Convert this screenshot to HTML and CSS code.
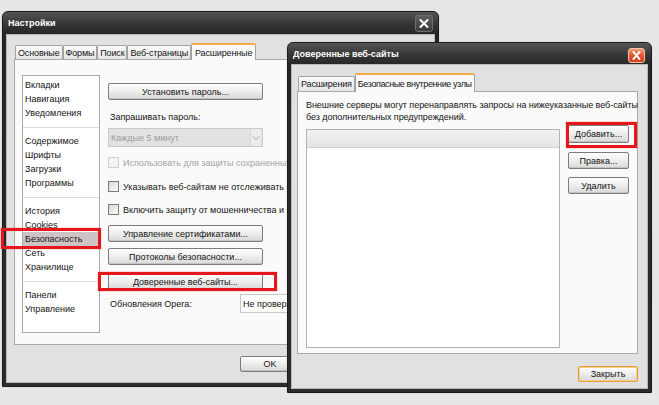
FILE: index.html
```html
<!DOCTYPE html>
<html lang="ru">
<head>
<meta charset="utf-8">
<title>Настройки</title>
<link rel="stylesheet" href="styles.css">
</head>
<body>
<div class="desktop">

  <section class="win win-settings">
    <header class="titlebar">
      <span class="title">Настройки</span>
      <span class="close close-dark">
        <svg width="18" height="17" viewBox="0 0 18 17"><path d="M5 4.5 L13 12.5 M13 4.5 L5 12.5" stroke="#fff" stroke-width="2.2" stroke-linecap="round"/></svg>
      </span>
    </header>
    <div class="win-body">
      <div class="tabs">
        <span class="tab">Основные</span>
        <span class="tab">Формы</span>
        <span class="tab">Поиск</span>
        <span class="tab">Веб-страницы</span>
        <span class="tab active">Расширенные</span>
      </div>
      <div class="panel panel-settings">
        <div class="nav-list">
          <div class="group">
            <div class="item">Вкладки</div>
            <div class="item">Навигация</div>
            <div class="item">Уведомления</div>
          </div>
          <div class="group">
            <div class="item">Содержимое</div>
            <div class="item">Шрифты</div>
            <div class="item">Загрузки</div>
            <div class="item">Программы</div>
          </div>
          <div class="group">
            <div class="item">История</div>
            <div class="item">Cookies</div>
            <div class="item selected">Безопасность</div>
            <div class="item">Сеть</div>
            <div class="item">Хранилище</div>
          </div>
          <div class="group">
            <div class="item">Панели</div>
            <div class="item">Управление</div>
          </div>
        </div>
        <div class="options">
          <button class="btn btn-wide">Установить пароль...</button>
          <div class="label ask-label">Запрашивать пароль:</div>
          <div class="select disabled">
            <span class="select-text">Каждые 5 минут</span>
            <span class="select-arrow"><svg width="8" height="6" viewBox="0 0 8 6"><path d="M1 1.5 L4 4.5 L7 1.5" fill="none" stroke="#c4c4c4" stroke-width="1.2"/></svg></span>
          </div>
          <label class="check disabled check-1"><span class="box"></span>Использовать для защиты сохраненных паролей</label>
          <label class="check check-2"><span class="box"></span>Указывать веб-сайтам не отслеживать меня</label>
          <label class="check check-3"><span class="box"></span>Включить защиту от мошенничества и вредоносных программ</label>
          <button class="btn btn-wide btn-certs">Управление сертификатами...</button>
          <button class="btn btn-wide btn-proto">Протоколы безопасности...</button>
          <button class="btn btn-wide btn-trusted">Доверенные веб-сайты...</button>
          <div class="update-row">
            <span class="label update-label">Обновления Opera:</span>
            <span class="select select-white"><span class="select-text">Не проверять</span></span>
          </div>
        </div>
      </div>
      <div class="footer footer-settings">
        <button class="btn btn-foot">OK</button>
        <button class="btn btn-foot">Отмена</button>
        <button class="btn btn-foot">Справка</button>
      </div>
    </div>
  </section>

  <div class="mark mark-security"></div>
  <div class="mark mark-trusted"></div>

  <section class="win win-trusted">
    <header class="titlebar">
      <span class="title">Доверенные веб-сайты</span>
      <span class="close close-red">
        <svg width="17" height="15" viewBox="0 0 17 15"><path d="M5 3.5 L12 11.5 M12 3.5 L5 11.5" stroke="#fff" stroke-width="2.2" stroke-linecap="round"/></svg>
      </span>
    </header>
    <div class="win-body">
      <div class="tabs tabs-trusted">
        <span class="tab">Расширения</span>
        <span class="tab active">Безопасные внутренние узлы</span>
      </div>
      <div class="panel panel-trusted">
        <p class="intro">Внешние серверы могут перенаправлять запросы на нижеуказанные веб-сайты<br>без дополнительных предупреждений.</p>
        <div class="list-row">
          <div class="site-list">
            <div class="list-head"></div>
          </div>
          <div class="side-buttons">
            <button class="btn btn-side btn-add">Добавить...</button>
            <button class="btn btn-side btn-edit">Правка...</button>
            <button class="btn btn-side btn-del">Удалить</button>
          </div>
        </div>
      </div>
      <div class="footer footer-trusted">
        <button class="btn btn-default">Закрыть</button>
      </div>
    </div>
  </section>

  <div class="mark mark-add"></div>
</div>
</body>
</html>
```

FILE: styles.css
```css
* { box-sizing: border-box; }

html, body {
  margin: 0;
  padding: 0;
}

body {
  width: 659px;
  height: 405px;
  overflow: hidden;
  background: #e6e6e6;
  font-family: "Liberation Sans", Arial, sans-serif;
  font-size: 9px;
  color: #141414;
}

.desktop {
  position: relative;
  width: 659px;
  height: 405px;
  background: #e7e7e7;
}

/* ---------- windows ---------- */
.win {
  position: absolute;
  display: flex;
  flex-direction: column;
  background: linear-gradient(#555 0, #363636 12px, #262626 22px, #2c2c2c 100%);
  border: 1px solid #1b1b1b;
  border-radius: 6px 6px 0 0;
  padding: 0 3px 3px;
  box-shadow: 0 0 1px rgba(0, 0, 0, .35);
}

.win-settings {
  left: 2px;
  top: 11px;
  width: 437px;
  height: 376px;
}

.win-trusted {
  left: 287px;
  top: 42px;
  width: 365px;
  height: 351px;
  z-index: 2;
}

.titlebar {
  height: 22px;
  flex: none;
  display: flex;
  align-items: center;
  justify-content: space-between;
  padding: 0 2px;
  color: #fff;
  font-weight: bold;
  font-size: 9px;
}

.win-trusted .titlebar {
  height: 21px;
}

.close {
  display: flex;
  align-items: center;
  justify-content: center;
  border-radius: 3px;
}

.close-dark {
  width: 18px;
  height: 17px;
  background: linear-gradient(#5d5d5d, #3a3a3a);
  border: 1px solid #6e6e6e;
}

.close-red {
  width: 17px;
  height: 15px;
  margin-top: 4px;
  margin-right: 1px;
  background: linear-gradient(#f39a74, #e0502a 55%, #d2401c);
  border: 1px solid #f6c3ad;
}

.win-body {
  flex: 1;
  display: flex;
  flex-direction: column;
  background: #e1e1e1;
  border: 1px solid #b9b9b9;
  min-height: 0;
}

.win-settings .win-body {
  padding: 8px 0 0 7px;
}

.win-trusted .win-body {
  padding: 8px 9px 0 5px;
}

/* ---------- tabs ---------- */
.tabs {
  display: flex;
  align-items: flex-end;
  height: 16px;
  padding-left: 1px;
  flex: none;
}

.tabs-trusted {
  height: 18px;
}

.tab {
  height: 14px;
  padding: 0 2px;
  display: flex;
  align-items: center;
  border: 1px solid #a2a2a2;
  border-bottom: none;
  border-radius: 2px 2px 0 0;
  background: linear-gradient(#fbfbfb, #e6e6e6);
  white-space: nowrap;
  letter-spacing: -0.15px;
}

.tabs-trusted .tab {
  height: 15px;
}

.tab.active {
  position: relative;
  z-index: 1;
  height: 17px;
  margin-bottom: -1px;
  padding: 0 3px;
  background: #fafafa;
  border-top: 2px solid #f3ac45;
}

.tabs-trusted .tab.active {
  height: 19px;
  padding: 0 2px;
  letter-spacing: -0.4px;
}

.panel {
  background: #fafafa;
  border: 1px solid #a9a9a9;
}

/* ---------- settings panel ---------- */
.panel-settings {
  flex: 1;
  display: flex;
  align-items: flex-start;
  padding: 15px 7px 0;
}

.nav-list {
  width: 78px;
  height: 258px;
  flex: none;
  background: #fff;
  border: 1px solid #a9a9a9;
  padding-top: 2px;
}

.group + .group {
  margin-top: 7px;
  padding-top: 6px;
  border-top: 1px solid #dcdcdc;
}

.item {
  height: 14px;
  line-height: 14px;
  padding-left: 2px;
  white-space: nowrap;
}

.item.selected {
  background: #cdc4c6;
}

.options {
  margin-left: 8px;
  margin-top: 8px;
  width: 155px;
  display: flex;
  flex-direction: column;
  align-items: flex-start;
}

.btn {
  height: 17px;
  padding: 0;
  border: 1px solid #7c7c7c;
  border-radius: 2px;
  background: linear-gradient(#ffffff, #efefef 45%, #d9d9d9);
  box-shadow: inset 0 -1px 0 #c2c2c2;
  font-family: inherit;
  font-size: 9px;
  color: #141414;
  text-align: center;
  white-space: nowrap;
}

.btn-wide {
  width: 155px;
}

.label {
  line-height: 12px;
  white-space: nowrap;
}

.ask-label {
  margin-top: 11px;
  padding-left: 2px;
}

.select {
  display: flex;
  align-items: center;
  height: 19px;
  border: 1px solid #c9c9c9;
  white-space: nowrap;
}

.select.disabled {
  width: 155px;
  margin-top: 5px;
  background: #e2e2e2;
  color: #9d9d9d;
  justify-content: space-between;
}

.select-text {
  padding-left: 2px;
}

.select-arrow {
  width: 11px;
  height: 17px;
  margin-right: 1px;
  display: flex;
  align-items: center;
  justify-content: center;
  background: #ececec;
  border-left: 1px solid #d4d4d4;
}

.check {
  display: flex;
  align-items: center;
  gap: 4px;
  height: 13px;
  white-space: nowrap;
}

.check .box {
  width: 11px;
  height: 11px;
  flex: none;
  border: 1px solid #7a7a7a;
  background: linear-gradient(135deg, #d9d9d9, #fafafa);
}

.check.disabled {
  color: #a3a3a3;
}

.check.disabled .box {
  border-color: #d0d0d0;
  background: #f4f4f4;
}

.check-1 { margin-top: 9px; }
.check-2 { margin-top: 11px; }
.check-3 { margin-top: 10px; }

.btn-certs { margin-top: 9px; }
.btn-proto { margin-top: 6px; }
.btn-trusted { margin-top: 8px; }

.update-row {
  display: flex;
  align-items: center;
  margin-top: 4px;
}

.update-label {
  width: 132px;
  padding-left: 2px;
}

.select-white {
  width: 120px;
  background: #fff;
  height: 19px;
}

.footer {
  display: flex;
  justify-content: flex-end;
  flex: none;
}

.footer-settings {
  height: 37px;
  padding: 11px 8px 0 0;
  gap: 3px;
}

.btn-foot {
  width: 60px;
  height: 16px;
}

/* ---------- trusted sites dialog ---------- */
.panel-trusted {
  flex: 1;
  padding: 7px 8px 5px;
}

.intro {
  margin: 0;
  line-height: 12px;
  white-space: nowrap;
  letter-spacing: -0.05px;
}

.list-row {
  display: flex;
  align-items: flex-start;
  margin-top: 2px;
}

.site-list {
  width: 257px;
  height: 219px;
  margin-top: 4px;
  background: #fff;
  border: 1px solid #b3b3b3;
}

.list-head {
  height: 18px;
  background: linear-gradient(#f2f2f2, #e4e4e4);
  border-bottom: 1px solid #d2d2d2;
}

.side-buttons {
  margin-left: 8px;
  display: flex;
  flex-direction: column;
}

.btn-side {
  width: 61px;
}

.btn-add { height: 18px; }
.btn-edit { margin-top: 9px; }
.btn-del { margin-top: 8px; }

.footer-trusted {
  height: 35px;
  padding-top: 12px;
}

.btn-default {
  width: 60px;
  height: 16px;
  border: 1px solid #e39a3a;
  box-shadow: inset 0 0 0 1px #f7cf8e;
}

/* ---------- red annotation frames ---------- */
.mark {
  position: absolute;
  border: 3px solid #e5171d;
  box-shadow: 0 0 1px rgba(229, 23, 29, .7);
  z-index: 3;
}

.mark-security {
  left: 1px;
  top: 228px;
  width: 100px;
  height: 21px;
}

.mark-trusted {
  left: 98px;
  top: 272px;
  width: 179px;
  height: 19px;
}

.mark-add {
  left: 566px;
  top: 122px;
  width: 71px;
  height: 26px;
}
```
